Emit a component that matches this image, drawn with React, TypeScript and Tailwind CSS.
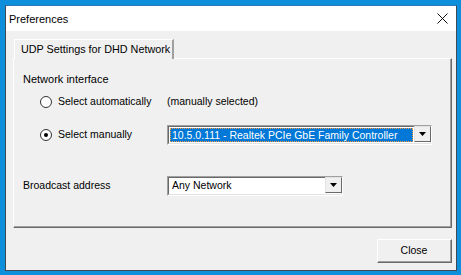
import type { ReactNode } from 'react';

const font = { fontFamily: '"Liberation Sans", Arial, sans-serif' };

const Radio = ({ checked, label }: { checked?: boolean; label: string }) => (
    <div className="flex items-center w-[127px] ml-[17px] shrink-0">
        <span className="w-[12px] h-[12px] rounded-full border border-[#333] bg-white flex items-center justify-center shrink-0">
            {checked && <span className="w-[4px] h-[4px] rounded-full bg-black" />}
        </span>
        <span className="ml-[6px] whitespace-nowrap">{label}</span>
    </div>
);

const Combo = ({ width, children }: { width: string; children: ReactNode }) => (
    <div className={`${width} h-[20px] flex border border-t-[#a0a0a0] border-l-[#a0a0a0] border-b-white border-r-white`}>
        <div className="flex-1 flex border border-t-[#696969] border-l-[#696969] border-b-[#e3e3e3] border-r-[#e3e3e3] bg-white">
            <div className="flex-1 flex p-[1px] min-w-0">{children}</div>
            <div className="w-[17px] h-[16px] -mt-px -mr-px flex items-center justify-center bg-[#f0f0f0] border border-t-[#e3e3e3] border-l-[#e3e3e3] border-b-[#696969] border-r-[#696969]">
                <svg width="7" height="4" viewBox="0 0 7 4">
                    <path d="M0 0h7L3.5 4z" fill="#000" />
                </svg>
            </div>
        </div>
    </div>
);

export default function App() {
    return (
        <div className="w-[461px] h-[275px] bg-[#0e8fdc] pl-[5px] pt-[5px] overflow-hidden text-[10.5px] text-black" style={font}>
            <div className="w-[452px] h-[266px] flex flex-col border border-[#3d4a56] border-t-[#2c79b8] bg-[#f0f0f0]">
                <div className="h-[25px] bg-white flex items-center justify-between pl-[3px] pr-[7px] shrink-0">
                    <span className="text-[11px] pt-[1px]">Preferences</span>
                    <svg width="11" height="11" viewBox="0 0 11 11" className="mr-[1px]">
                        <path d="M0.5 0.5l10 10M10.5 0.5l-10 10" stroke="#111" strokeWidth="1" />
                    </svg>
                </div>

                <div className="flex-1 flex flex-col pl-[7px] pr-[4px] pt-[8px]">
                    <div className="flex h-[19px] relative z-10">
                        <div className="ml-[1px] w-[160px] h-[20px] bg-[#f0f0f0] border-l border-t border-white border-r-2 border-r-[#a0a0a0] flex items-center pl-[6px] pb-[1px] whitespace-nowrap text-[10.8px]">
                            UDP Settings for DHD Network
                        </div>
                    </div>

                    <div className="h-[170px] border border-l-white border-t-white border-r-[#696969] border-b-[#696969] bg-[#f0f0f0]">
                        <div className="h-full border-r border-b border-[#a0a0a0] pl-[9px] pt-[13px] flex flex-col">
                            <div className="leading-[14px] text-[11px]">Network interface</div>

                            <div className="flex items-center h-[20px] mt-[6px]">
                                <Radio label="Select automatically" />
                                <span className="whitespace-nowrap">(manually selected)</span>
                            </div>

                            <div className="flex items-center h-[20px] mt-[13px]">
                                <Radio checked label="Select manually" />
                                <Combo width="w-[265px]">
                                    <div className="flex-1 bg-[#0078d7] text-white border border-dotted border-[#ff9a3c] flex items-center pl-px leading-[12px] whitespace-nowrap overflow-hidden">
                                        10.5.0.111 - Realtek PCIe GbE Family Controller
                                    </div>
                                </Combo>
                            </div>

                            <div className="flex items-center h-[20px] mt-[31px]">
                                <span className="w-[144px] shrink-0">Broadcast address</span>
                                <Combo width="w-[176px]">
                                    <div className="flex-1 flex items-center pl-[2px]">Any Network</div>
                                </Combo>
                            </div>
                        </div>
                    </div>

                    <div className="flex justify-end mt-[11px]">
                        <button className="w-[75px] h-[24px] bg-[#f0f0f0] border border-l-white border-t-white border-r-[#696969] border-b-[#696969] flex">
                            <span className="flex-1 flex items-center justify-center border-r border-b border-[#a0a0a0] pt-px">Close</span>
                        </button>
                    </div>
                </div>
            </div>
        </div>
    );
}
